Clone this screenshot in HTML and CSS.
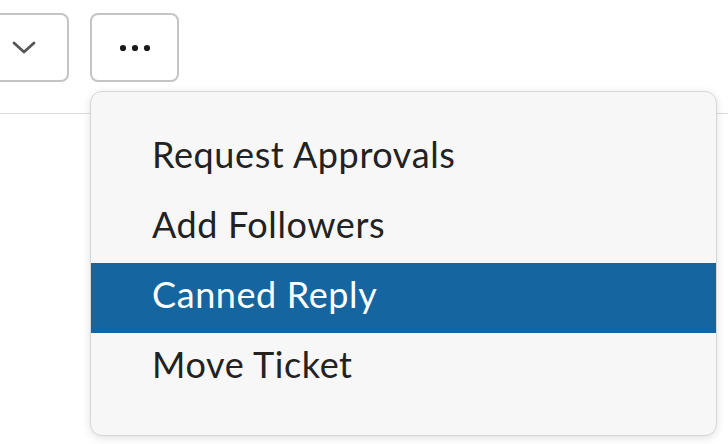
FILE: index.html
```html
<!DOCTYPE html>
<html lang="en">
<head>
  <meta charset="UTF-8">
  <title>Ticket Actions</title>
  <link rel="stylesheet" href="styles.css">
</head>
<body>

<div class="page">
  <div class="toolbar">
    <button class="tool-button chevron-button" aria-label="Expand">
      <svg width="24" height="14" viewBox="0 0 24 14"><path d="M2 2 L12 11 L22 2" fill="none" stroke="#555" stroke-width="2.8" stroke-linecap="round" stroke-linejoin="round"/></svg>
    </button>
    <div class="more-wrap">
      <button class="tool-button more-button" aria-label="More actions">
        <svg width="32" height="8" viewBox="0 0 32 8"><circle cx="4" cy="4" r="3.1" fill="#1a1a1a"/><circle cx="16" cy="4" r="3.1" fill="#1a1a1a"/><circle cx="28" cy="4" r="3.1" fill="#1a1a1a"/></svg>
      </button>

      <!-- actions menu -->
      <ul class="menu">
        <li class="menu-item">Request Approvals</li>
        <li class="menu-item">Add Followers</li>
        <li class="menu-item active">Canned Reply</li>
        <li class="menu-item">Move Ticket</li>
      </ul>
    </div>
  </div>
</div>

</body>
</html>
```

FILE: styles.css
```css
body {
  font-family: Lato, 'Open Sans', sans-serif;
  background-color: #fff;
  color: #222;
  margin: 0;
  padding: 0;
}
.page {
  min-height: 100vh;
}
.toolbar {
  display: flex;
  gap: 21px;
  margin-left: -21px;
  padding: 13px 0 31px;
  border-bottom: 1px solid #dcdcdc;
}
.tool-button {
  display: flex;
  justify-content: center;
  align-items: center;
  width: 90px;
  height: 69px;
  padding: 0;
  background-color: #fff;
  border: 2px solid #c4c4c4;
  border-radius: 8px;
}
.more-button {
  width: 89px;
}
.more-wrap {
  position: relative;
  z-index: 1;
}
.menu {
  position: absolute;
  top: 78px;
  left: 0;
  width: 625px;
  margin: 0;
  padding: 31px 0 32px;
  list-style: none;
  background-color: #f7f7f7;
  border: 1px solid #d6d6d6;
  border-radius: 12px;
  box-shadow: 0 2px 8px rgba(0,0,0,0.12);
}
.menu-item {
  height: 70px;
  line-height: 63px;
  padding-left: 61px;
  font-size: 36px;
  letter-spacing: 0.6px;
  color: #222;
}
.menu-item.active {
  background-color: #1565a1;
  color: #fff;
}
```
